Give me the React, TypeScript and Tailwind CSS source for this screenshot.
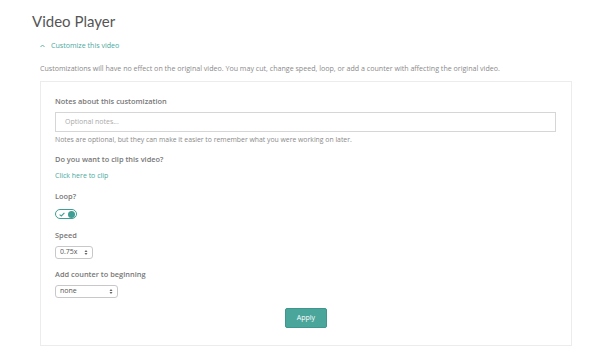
import { useState } from "react";

const font = { fontFamily: '"Open Sans", "Liberation Sans", sans-serif' };

function Label({ children }: { children: React.ReactNode }) {
  return <div className="text-[7.4px] font-semibold leading-none text-[#777]">{children}</div>;
}

function SelectBox({ value, width }: { value: string; width: string }) {
  return (
    <div
      className={`flex h-[13px] items-center justify-between rounded-[3px] border border-[#c8c8c8] bg-white pl-[4px] pr-[4px] text-[7px] text-[#555] ${width}`}
    >
      <span>{value}</span>
      <svg width="4" height="7" viewBox="0 0 4 7" className="text-[#666]">
        <path d="M0.5 3 L2 1 L3.5 3 Z" fill="currentColor" />
        <path d="M0.5 4 L2 6 L3.5 4 Z" fill="currentColor" />
      </svg>
    </div>
  );
}

export default function App() {
  const [loop, setLoop] = useState(true);

  return (
    <div className="h-[360px] w-[600px] bg-white" style={font}>
      <div className="pl-[32px] pt-[14px]">
        <h1
          className="text-[15px] font-normal leading-none text-[#555]"
          style={{ fontFamily: 'Lato, "Open Sans", sans-serif' }}
        >
          Video Player
        </h1>
      </div>

      <div className="mt-[13px] flex items-center pl-[40px] text-[#4aa99e]">
        <svg width="5" height="4" viewBox="0 0 5 4" className="mr-[6px]">
          <path d="M0.5 3 L2.5 1 L4.5 3" fill="none" stroke="currentColor" strokeWidth="0.9" />
        </svg>
        <span className="text-[7.1px] leading-none">Customize this video</span>
      </div>

      <p className="mt-[16px] pl-[40px] text-[7.1px] leading-none text-[#8a8a8a]">
        Customizations will have no effect on the original video. You may cut, change speed, loop, or add a counter with affecting the original video.
      </p>

      <div className="ml-[40px] mt-[9px] w-[532px] border border-[#ececec] px-[14px] pb-[17px] pt-[16px]">
        <Label>Notes about this customization</Label>
        <input
          className="mt-[6px] block h-[20px] w-[501px] border border-[#d6d6d6] px-[9px] text-[7px] text-[#555] outline-none placeholder:text-[#aaa]"
          placeholder="Optional notes..."
        />
        <div className="mt-[5px] text-[6.85px] leading-none text-[#8a8a8a]">
          Notes are optional, but they can make it easier to remember what you were working on later.
        </div>

        <div className="mt-[13px]">
          <Label>Do you want to clip this video?</Label>
        </div>
        <div className="mt-[8px] text-[7px] leading-none text-[#4aa99e]">Click here to clip</div>

        <div className="mt-[14px]">
          <Label>Loop?</Label>
        </div>
        <button
          onClick={() => setLoop(!loop)}
          className="mt-[9px] flex h-[10px] w-[22px] items-center justify-between rounded-full border border-[#3f9e93] bg-white pl-[3px] pr-[1px]"
        >
          <svg width="6" height="5" viewBox="0 0 6 5">
            <path d="M0.6 2.6 L2.3 4 L5.4 0.9" fill="none" stroke="#3f9e93" strokeWidth="1.1" />
          </svg>
          <span className="h-[7px] w-[7px] rounded-full bg-[#3f9e93]" />
        </button>

        <div className="mt-[13px]">
          <Label>Speed</Label>
        </div>
        <div className="mt-[6px]">
          <SelectBox value="0.75x" width="w-[38px]" />
        </div>

        <div className="mt-[12px]">
          <Label>Add counter to beginning</Label>
        </div>
        <div className="mt-[7px]">
          <SelectBox value="none" width="w-[63px]" />
        </div>

        <div className="mt-[10px] flex justify-center">
          <button className="h-[20px] w-[42px] rounded-[2px] border border-[#3e968c] bg-[#4aa59b] text-[7px] text-white">
            Apply
          </button>
        </div>
      </div>
    </div>
  );
}
